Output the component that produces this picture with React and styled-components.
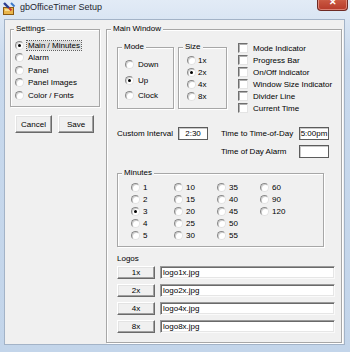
import styled, { createGlobalStyle } from "styled-components";

const GlobalStyle = createGlobalStyle`
  html, body { margin: 0; padding: 0; background: #fff; }
  body { font-family: "Liberation Sans", Arial, sans-serif; font-size: 8px; color: #000; }
  * { box-sizing: border-box; }
`

const settings = ["Main / Minutes", "Alarm", "Panel", "Panel Images", "Color / Fonts"]
const modes = ["Down", "Up", "Clock"]
const sizes = ["1x", "2x", "4x", "8x"]
const flags = ["Mode Indicator", "Progress Bar", "On/Off Indicator", "Window Size Indicator", "Divider Line", "Current Time"]
const minutes = ["1", "2", "3", "4", "5", "10", "15", "20", "25", "30", "35", "40", "45", "50", "55", "60", "90", "120"]
const logos = ["1x", "2x", "4x", "8x"]

function AppIcon() {
    return (
        <svg width="14" height="13" viewBox="0 0 14 13">
            <rect x="1.5" y="5.5" width="10" height="7" fill="#e9b64c" stroke="#8a5a12" />
            <rect x="3" y="7" width="7" height="2" fill="#f7dd92" />
            <path d="M2 1 L7 6" stroke="#2b3d8f" strokeWidth="2.4" />
            <path d="M7 6 L9.5 8.5" stroke="#c8322b" strokeWidth="2" />
            <path d="M9 1 L12.5 4.5" stroke="#3a78c9" strokeWidth="2" />
        </svg>
    )
}

function Radio({ on, children, h, gap }) {
    return (
        <OptionRow $h={h} $gap={gap}>
            <RadioDot $on={on} />
            {children}
        </OptionRow>
    )
}

export default function App() {
    return (
        <>
            <GlobalStyle />
            <Window>
                <TitleBar>
                    <AppIcon />
                    <Title>gbOfficeTimer Setup</Title>
                    <CloseButton>✕</CloseButton>
                </TitleBar>
                <Client>
                    <LeftColumn>
                        <Group $height={83}>
                            <Legend $indent={3}>Settings</Legend>
                            <GroupBody $pad="5px 4px 0 4px">
                                {settings.map((s, i) =>
                                    <Radio key={s} on={i === 0} h={12.5}>
                                        {i === 0 ? <Focused>{s}</Focused> : s}
                                    </Radio>
                                )}
                            </GroupBody>
                        </Group>
                        <ButtonRow>
                            <PushButton $w={37}>Cancel</PushButton>
                            <PushButton $w={36}>Save</PushButton>
                        </ButtonRow>
                    </LeftColumn>

                    <MainGroup>
                        <Legend>Main Window</Legend>
                        <GroupBody $pad="8px 6px 0 10px">
                            <TopRow>
                                <Group $width={57} $height={67}>
                                    <Legend>Mode</Legend>
                                    <GroupBody $pad="5px 0 0 7px">
                                        {modes.map(m =>
                                            <Radio key={m} on={m === "Up"} h={15.5}>{m}</Radio>
                                        )}
                                    </GroupBody>
                                </Group>
                                <Group $width={49} $height={67} style={{ marginLeft: 4 }}>
                                    <Legend>Size</Legend>
                                    <GroupBody $pad="2px 0 0 8px">
                                        {sizes.map(s =>
                                            <Radio key={s} on={s === "2x"} h={12} gap={2}>{s}</Radio>
                                        )}
                                    </GroupBody>
                                </Group>
                                <Checks>
                                    {flags.map(f =>
                                        <OptionRow key={f} $h={12} $gap={5}>
                                            <CheckBox />
                                            {f}
                                        </OptionRow>
                                    )}
                                </Checks>
                            </TopRow>

                            <TimeRow>
                                <Pair>
                                    <FieldLabel $w={61}>Custom Interval</FieldLabel>
                                    <TimeBox>2:30</TimeBox>
                                </Pair>
                                <TimeGrid>
                                    <FieldLabel>Time to Time-of-Day</FieldLabel>
                                    <TimeBox>5:00pm</TimeBox>
                                    <FieldLabel>Time of Day Alarm</FieldLabel>
                                    <TimeBox />
                                </TimeGrid>
                            </TimeRow>

                            <Group $width={207} $height={79} style={{ marginTop: 10 }}>
                                <Legend>Minutes</Legend>
                                <MinuteGrid>
                                    {minutes.map(m =>
                                        <Radio key={m} on={m === "3"} h={12} gap={3}>{m}</Radio>
                                    )}
                                </MinuteGrid>
                            </Group>

                            <LogosLabel>Logos</LogosLabel>
                            <LogoList>
                                {logos.map(l =>
                                    <LogoRow key={l}>
                                        <PushButton $w={38} $h={13}>{l}</PushButton>
                                        <FileBox>logo{l}.jpg</FileBox>
                                    </LogoRow>
                                )}
                            </LogoList>
                        </GroupBody>
                    </MainGroup>
                </Client>
            </Window>
        </>
    )
}

const Window = styled.div`
    width: 350px;
    height: 352px;
    display: flex;
    flex-direction: column;
    padding: 0 5px 7px 4px;
    overflow: hidden;
    background: linear-gradient(#e2ebf6, #c8d9ed 60px, #c3d5ea);
`

const TitleBar = styled.div`
    height: 19px;
    flex: none;
    display: flex;
    align-items: flex-start;
    padding: 2px 0 0 0;
    margin-left: -2px;
`

const Title = styled.span`
    margin-left: 4px;
    font-size: 9px;
    line-height: 11px;
    color: #1e2530;
`

const CloseButton = styled.div`
    margin-left: auto;
    margin-top: -10px;
    margin-right: -3px;
    width: 31px;
    height: 19px;
    border: 1px solid #6e2a24;
    border-top: none;
    border-radius: 0 0 4px 4px;
    background: linear-gradient(#e0a08f, #c8553f 50%, #b63a2a);
    box-shadow: inset 0 0 0 1px rgba(255, 200, 190, 0.5);
    color: #fff;
    font-size: 9px;
    font-weight: bold;
    line-height: 9px;
    display: flex;
    align-items: flex-end;
    justify-content: center;
    padding-bottom: 3px;
`

const Client = styled.div`
    flex: 1;
    display: flex;
    gap: 6px;
    padding: 4px 2px 1px 5px;
    border: 1px solid #a3b3c7;
    background: #f0f0f0;
`

const LeftColumn = styled.div`
    width: 90px;
    display: flex;
    flex-direction: column;
`

const Group = styled.fieldset`
    margin: 0;
    padding: 0;
    min-width: 0;
    width: ${p => p.$width ? p.$width + "px" : "auto"};
    height: ${p => p.$height}px;
    flex: none;
    border: 1px solid #a7a7a7;
    box-shadow: inset 1px 1px 0 #fff, 1px 1px 0 #fff;
`

const MainGroup = styled(Group)`
    width: 236px;
    height: auto;
`

const Legend = styled.legend`
    margin-left: ${p => p.$indent ?? 4}px;
    padding: 0 2px;
    line-height: 10px;
    font-size: 8px;
    background: #f0f0f0;
`

const GroupBody = styled.div`
    padding: ${p => p.$pad};
`

const OptionRow = styled.div`
    height: ${p => p.$h}px;
    display: flex;
    align-items: center;
    gap: ${p => p.$gap ?? 4}px;
    white-space: nowrap;
`

const RadioDot = styled.span`
    flex: none;
    width: 9px;
    height: 9px;
    border-radius: 50%;
    background: #fff;
    border: 1px solid;
    border-color: #8a8a8a #e2e2e2 #e2e2e2 #8a8a8a;
    box-shadow: inset 1px 1px 0 #cfcfcf;
    display: flex;
    align-items: center;
    justify-content: center;
    &::after {
        content: "";
        width: 3px;
        height: 3px;
        border-radius: 50%;
        background: ${p => p.$on ? "#000" : "transparent"};
    }
`

const Focused = styled.span`
    background: #dcdcdc;
    outline: 1px dotted #606060;
    padding: 0 1px;
    margin-left: -1px;
`

const CheckBox = styled.span`
    flex: none;
    width: 10px;
    height: 10px;
    background: #fff;
    border: 1px solid;
    border-color: #6f6f6f #e4e4e4 #e4e4e4 #6f6f6f;
    box-shadow: inset 1px 1px 0 #b0b0b0;
`

const ButtonRow = styled.div`
    display: flex;
    gap: 6px;
    margin-top: 8px;
    padding-left: 5px;
`

const PushButton = styled.div`
    flex: none;
    width: ${p => p.$w}px;
    height: ${p => p.$h ?? 18}px;
    display: flex;
    align-items: center;
    justify-content: center;
    background: #f0f0f0;
    border: 1px solid;
    border-color: #fff #6a6a6a #6a6a6a #fff;
    box-shadow: inset -1px -1px 0 #a0a0a0, inset 1px 1px 0 #e3e3e3;
`

const TopRow = styled.div`
    display: flex;
    align-items: flex-start;
`

const Checks = styled.div`
    margin-left: 11px;
`

const TimeRow = styled.div`
    display: flex;
    margin-top: 13px;
`

const Pair = styled.div`
    display: flex;
    align-items: center;
    height: 13px;
`

const FieldLabel = styled.span`
    width: ${p => p.$w ? p.$w + "px" : "auto"};
    display: flex;
    align-items: center;
    white-space: nowrap;
`

const TimeGrid = styled.div`
    margin-left: 13px;
    display: grid;
    grid-template-columns: 78px 30px;
    grid-auto-rows: 13px;
    row-gap: 5px;
`

const TimeBox = styled.div`
    width: 30px;
    height: 13px;
    background: #fff;
    border: 1px solid #5c5c5c;
    box-shadow: inset 1px 1px 0 #c8c8c8;
    display: flex;
    align-items: center;
    justify-content: center;
`

const MinuteGrid = styled.div`
    padding: 3px 0 0 13px;
    display: grid;
    grid-auto-flow: column;
    grid-template-rows: repeat(5, 12px);
    grid-template-columns: repeat(4, 43px);
`

const LogosLabel = styled.div`
    margin-top: 7px;
    line-height: 10px;
`

const LogoList = styled.div`
    margin-top: 2px;
    display: flex;
    flex-direction: column;
    gap: 5px;
`

const LogoRow = styled.div`
    display: flex;
    gap: 5px;
`

const FileBox = styled.div`
    width: 176px;
    height: 13px;
    padding-left: 2px;
    display: flex;
    align-items: center;
    background: #fff;
    border: 1px solid;
    border-color: #9a9a9a #fafafa #fafafa #9a9a9a;
    box-shadow: inset 1px 1px 0 #6a6a6a, inset -1px -1px 0 #e6e6e6;
`
